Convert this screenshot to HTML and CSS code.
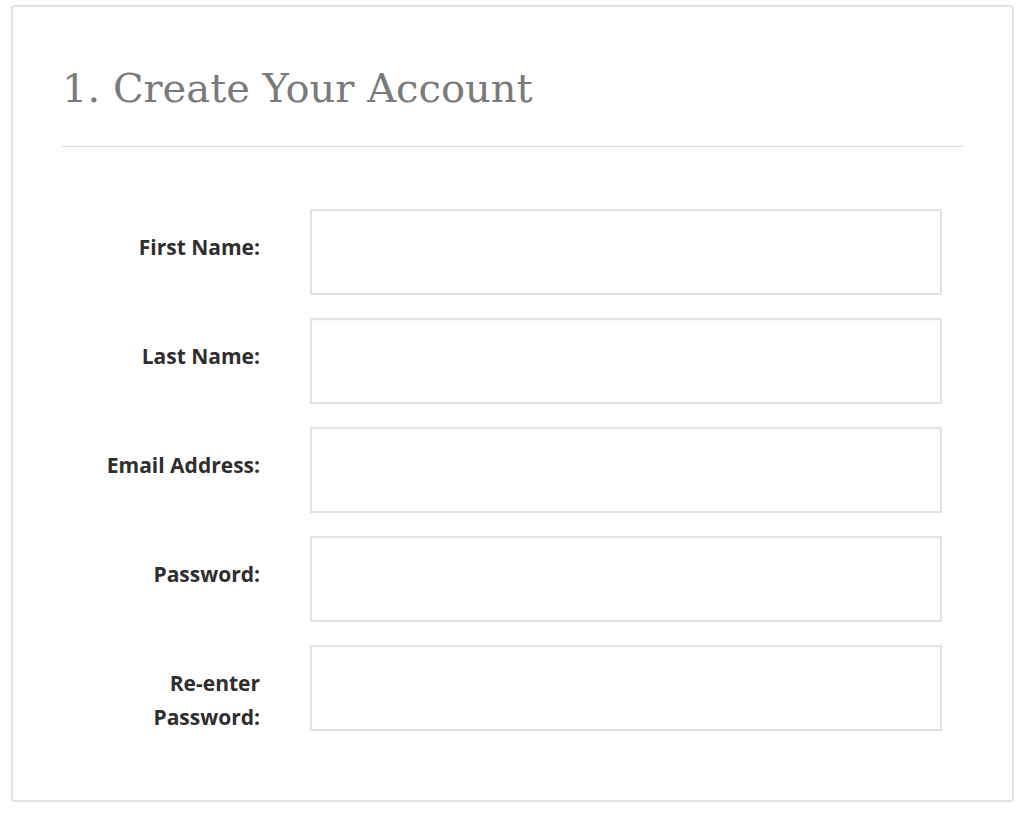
FILE: index.html
```html
<!DOCTYPE html>
<html>
<head>
<meta charset="utf-8">
<link rel="stylesheet" href="styles.css">
</head>
<body>
<div class="card">
  <h1 class="title">1. Create Your Account</h1>
  <div class="rule"></div>
  <form class="form">
    <div class="row"><label class="label">First Name:</label><input class="field" type="text"></div>
    <div class="row"><label class="label">Last Name:</label><input class="field" type="text"></div>
    <div class="row"><label class="label">Email Address:</label><input class="field" type="text"></div>
    <div class="row"><label class="label">Password:</label><input class="field" type="password"></div>
    <div class="row"><label class="label">Re-enter<br>Password:</label><input class="field" type="password"></div>
  </form>
</div>
</body>
</html>
```

FILE: styles.css
```css
html, body {
  margin: 0;
  padding: 0;
  background: #ffffff;
}
body {
  padding: 5px 10px 0 11px;
}
.card {
  box-sizing: border-box;
  width: 1003px;
  height: 797px;
  border: 2px solid #e3e3e3;
  border-radius: 4px;
  background: #fff;
  padding: 0 49px;
  box-shadow: 0 1px 3px rgba(0,0,0,0.04);
}
.title {
  margin: 0;
  padding-top: 56px;
  height: 83px;
  box-sizing: content-box;
  font-family: "DejaVu Serif", "Liberation Serif", serif;
  font-weight: normal;
  font-size: 40px;
  line-height: 50px;
  color: #7a7a7a;
  letter-spacing: 0;
}
.rule {
  height: 1px;
  background: #dcdcdc;
  margin: 0;
}
.form {
  display: flex;
  flex-direction: column;
  gap: 23px;
  padding-top: 62px;
}
.row {
  display: flex;
  gap: 50px;
  align-items: flex-start;
}
.label {
  width: 198px;
  text-align: right;
  padding-top: 21px;
  font-family: "Open Sans", "Liberation Sans", sans-serif;
  font-weight: 700;
  font-size: 21px;
  line-height: 34px;
  color: #2e2e2e;
}
.field {
  box-sizing: border-box;
  width: 632px;
  height: 86px;
  margin: 0;
  border: 2px solid #e2e2e2;
  border-radius: 0;
  background: #fff;
  box-shadow: inset 0 1px 2px rgba(0,0,0,0.03);
  outline: none;
}
```
